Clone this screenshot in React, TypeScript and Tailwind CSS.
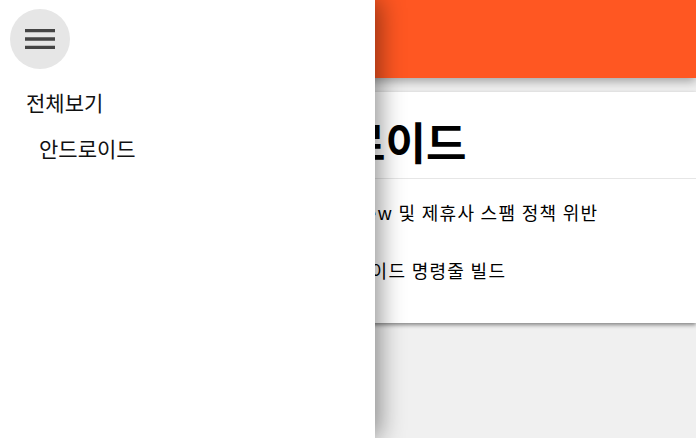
import React from 'react';

const font = { fontFamily: '"Noto Sans CJK KR", "Noto Sans", sans-serif' };

const MenuIcon: React.FC = () => (
  <svg width="40" height="40" viewBox="0 0 24 24" fill="#444">
    <path d="M3 18h18v-2H3v2zm0-5h18v-2H3v2zm0-7v2h18V6H3z" />
  </svg>
);

const App: React.FC = () => {
  return (
    <div className="relative w-full h-[438px] overflow-hidden bg-[#f0f0f0] text-black" style={font}>
      {/* App bar */}
      <header className="h-[78px] bg-[#ff5722] shadow-[0_3px_10px_rgba(0,0,0,0.35)]" />

      {/* Card */}
      <main className="pt-[14px]">
        <section className="ml-4 bg-white shadow-[0_2px_4px_rgba(0,0,0,0.45)]">
          <div className="h-[87px] flex items-center pt-[12px] pl-[248px] border-b border-[#e6e6e6]">
            <h1 className="text-[44px] font-bold leading-none">안드로이드</h1>
          </div>
          <ul className="pl-[301px] pt-[4px] pb-[24px] text-[18px] tracking-[1.3px]">
            <li className="h-[58px] flex items-center">Preview 및 제휴사 스팸 정책 위반</li>
            <li className="h-[58px] flex items-center">안드로이드 명령줄 빌드</li>
          </ul>
        </section>
      </main>

      {/* Drawer */}
      <aside className="absolute left-0 top-0 w-[375px] h-full bg-white shadow-[4px_0_24px_rgba(0,0,0,0.45)]">
        <button className="ml-[10px] mt-[9px] w-[60px] h-[60px] rounded-full bg-[#e6e6e6] flex items-center justify-center">
          <MenuIcon />
        </button>
        <nav className="mt-[12px]">
          <div className="pl-[26px] h-[44px] flex items-center text-[21px] text-[#111]">전체보기</div>
          <div className="pl-[39px] h-[48px] flex items-center text-[21px] text-[#111]">안드로이드</div>
        </nav>
      </aside>
    </div>
  );
};

export default App;
